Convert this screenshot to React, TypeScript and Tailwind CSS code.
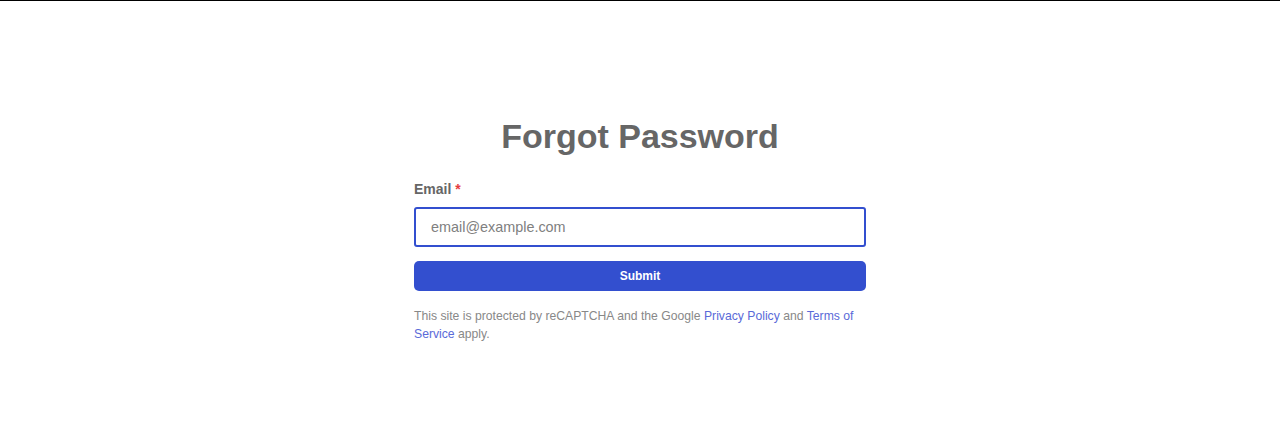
import React from "react";

export default function App() {
  return (
    <div
      className="min-h-[435px] w-full bg-white border-t border-black"
      style={{ fontFamily: '"Liberation Sans", Arial, sans-serif' }}
    >
      <div className="mx-auto w-[452px] pt-[115px]">
        <h1 className="text-center text-[34px] leading-[40px] font-bold text-[#666666]">
          Forgot Password
        </h1>
        <form className="mt-[23px]" onSubmit={(e) => e.preventDefault()}>
          <label className="block text-[14px] leading-[20px] font-bold text-[#666666] mb-2">
            Email <span className="text-[#e53e3e]">*</span>
          </label>
          <input
            type="email"
            placeholder="email@example.com"
            className="block w-full h-[40px] rounded-[3px] border-2 border-[#334fcf] px-[15px] text-[14.4px] text-[#333] placeholder:text-[#808080] outline-none"
          />
          <button
            type="submit"
            className="mt-[14px] block w-full h-[30px] rounded-[5px] bg-[#334fcf] text-white text-[12px] font-bold"
          >
            Submit
          </button>
          <p className="mt-[16px] text-[12.2px] leading-[18px] text-[#888888]">
            This site is protected by reCAPTCHA and the Google{" "}
            <a href="#" className="text-[#5a6ad8]">Privacy Policy</a> and{" "}
            <a href="#" className="text-[#5a6ad8]">Terms of Service</a> apply.
          </p>
        </form>
      </div>
    </div>
  );
}
